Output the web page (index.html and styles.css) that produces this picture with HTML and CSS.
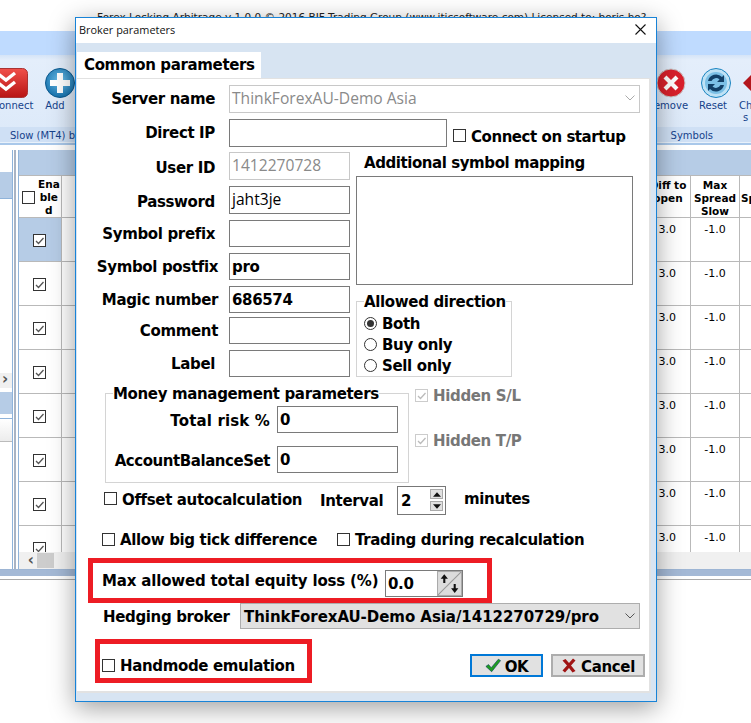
FILE: index.html
```html
<!DOCTYPE html>
<html lang="en">
<head>
<meta charset="utf-8">
<title>Broker parameters</title>
<link rel="stylesheet" href="styles.css">
</head>
<body>
<div class="app">
  <div class="app-title">Forex Locking Arbitrage v 1.0.0 © 2016 BJF Trading Group (www.iticsoftware.com) Licensed to: boris.ho?</div>
  <div class="app-caption"></div>
  <div class="ribbon">
    <div class="ribbon-main">
      <div class="ribbon-side">
        <div class="tool tool-connect">
          <svg class="icon icon-connect" viewBox="0 0 44 30"><defs><linearGradient id="gr" x1="0" y1="0" x2="0" y2="1"><stop offset="0" stop-color="#f0504a"/><stop offset="1" stop-color="#b81414"/></linearGradient></defs><rect x="0.5" y="0.5" width="43" height="29" rx="5" fill="url(#gr)" stroke="#a33"/><path d="M13 5l9 7 9-7M13 14l9 7 9-7" fill="none" stroke="#fff" stroke-width="3.4"/></svg>
          <span>onnect</span>
        </div>
        <div class="tool tool-add">
          <svg class="icon" viewBox="0 0 30 30"><defs><radialGradient id="gb" cx=".5" cy=".4" r=".6"><stop offset="0" stop-color="#6fc0ea"/><stop offset="1" stop-color="#1470ac"/></radialGradient></defs><circle cx="15" cy="15" r="14.5" fill="url(#gb)" stroke="#0e5a8e"/><path d="M12 5h6v7h7v6h-7v7h-6v-7H5v-6h7z" fill="#fff"/></svg>
          <span class="tool-text-add">Add</span>
        </div>
      </div>
      <div class="ribbon-side">
        <div class="tool tool-remove">
          <svg class="icon" viewBox="0 0 30 30"><circle cx="15" cy="15" r="14" fill="#d9202c" stroke="#c9c9c9"/><path d="M9 9l12 12M21 9L9 21" stroke="#fff" stroke-width="4.2"/></svg>
          <span>emove</span>
        </div>
        <div class="tool tool-reset">
          <svg class="icon" viewBox="0 0 30 30"><circle cx="15" cy="15" r="14.5" fill="#bfe2f5" stroke="#1a84c0"/><circle cx="15" cy="15" r="11" fill="#7cc0e6"/><path d="M7 13a8.300 8.300 0 0 1 14-4l2-2v7h-7l2.500-2.500a5 5 0 0 0-8 1.500zM23 17a8.300 8.300 0 0 1-14 4l-2 2v-7h7l-2.500 2.500a5 5 0 0 0 8-1.500z" fill="#123f66"/></svg>
          <span class="tool-text-reset">Reset</span>
        </div>
        <div class="tool tool-change">
          <svg class="icon icon-change" viewBox="0 0 16 24"><path d="M0 12L11 1v22z" fill="#b3161c"/></svg>
          <span>Ch<br>s</span>
        </div>
      </div>
    </div>
    <div class="ribbon-groups">
      <span class="group-left">Slow (MT4) b</span>
      <span class="group-right">Symbols</span>
    </div>
  </div>
  <div class="workspace">
    <aside class="side">
      <div class="side-top"></div>
      <div class="side-band"></div>
      <div class="side-list">
        <div class="side-scroll"><span>›</span></div>
      </div>
      <div class="side-band side-band-low"></div>
      <div class="side-list side-list-low">
        <div class="side-head"></div>
      </div>
    </aside>
    <div class="splitter"></div>
    <div class="grid-panel">
      <div class="grid-band"></div>
      <div class="grid">
        <div class="cell head head-check"><span class="cb"></span><span>Ena<br>ble<br>d</span></div>
        <div class="cell head"></div>
        <div class="cell head head-diff">Diff to<br>open</div>
        <div class="cell head">Max<br>Spread<br>Slow</div>
        <div class="cell head head-last">Sp</div>

        <div class="cell check selected"><span class="cb"><svg viewBox="0 0 11 11"><path d="M2 6l2.500 2.500L9.500 3" fill="none" stroke="#555" stroke-width="1.300"/></svg></span></div>
        <div class="cell"></div><div class="cell num-l">3.0</div><div class="cell num">-1.0</div><div class="cell"></div>

        <div class="cell check"><span class="cb"><svg viewBox="0 0 11 11"><path d="M2 6l2.500 2.500L9.500 3" fill="none" stroke="#555" stroke-width="1.300"/></svg></span></div>
        <div class="cell"></div><div class="cell num-l">3.0</div><div class="cell num">-1.0</div><div class="cell"></div>

        <div class="cell check"><span class="cb"><svg viewBox="0 0 11 11"><path d="M2 6l2.500 2.500L9.500 3" fill="none" stroke="#555" stroke-width="1.300"/></svg></span></div>
        <div class="cell"></div><div class="cell num-l">3.0</div><div class="cell num">-1.0</div><div class="cell"></div>

        <div class="cell check"><span class="cb"><svg viewBox="0 0 11 11"><path d="M2 6l2.500 2.500L9.500 3" fill="none" stroke="#555" stroke-width="1.300"/></svg></span></div>
        <div class="cell"></div><div class="cell num-l">3.0</div><div class="cell num">-1.0</div><div class="cell"></div>

        <div class="cell check"><span class="cb"><svg viewBox="0 0 11 11"><path d="M2 6l2.500 2.500L9.500 3" fill="none" stroke="#555" stroke-width="1.300"/></svg></span></div>
        <div class="cell"></div><div class="cell num-l">3.0</div><div class="cell num">-1.0</div><div class="cell"></div>

        <div class="cell check"><span class="cb"><svg viewBox="0 0 11 11"><path d="M2 6l2.500 2.500L9.500 3" fill="none" stroke="#555" stroke-width="1.300"/></svg></span></div>
        <div class="cell"></div><div class="cell num-l">3.0</div><div class="cell num">-1.0</div><div class="cell"></div>

        <div class="cell check"><span class="cb"><svg viewBox="0 0 11 11"><path d="M2 6l2.500 2.500L9.500 3" fill="none" stroke="#555" stroke-width="1.300"/></svg></span></div>
        <div class="cell"></div><div class="cell num-l">3.0</div><div class="cell num">-1.0</div><div class="cell"></div>

        <div class="cell check"><span class="cb"><svg viewBox="0 0 11 11"><path d="M2 6l2.500 2.500L9.500 3" fill="none" stroke="#555" stroke-width="1.300"/></svg></span></div>
        <div class="cell"></div><div class="cell num-l">3.0</div><div class="cell num">-1.0</div><div class="cell"></div>
      </div>
      <div class="hscroll"><span class="hscroll-arrow">‹</span><span class="hscroll-thumb"></span></div>
    </div>
  </div>
  <div class="app-foot"></div>
</div>

<section class="dialog">
  <header class="dialog-title">
    <span>Broker parameters</span>
    <svg class="close" viewBox="0 0 11 11"><path d="M.5.5l10 10M10.500.5l-10 10" stroke="#111" stroke-width="1.100"/></svg>
  </header>
  <div class="tabs"><div class="tab">Common parameters</div></div>
  <div class="panel">
    <div class="row row-server">
      <div class="label label-main">Server name</div>
      <div class="field field-light field-server">ThinkForexAU-Demo Asia<svg class="chev" viewBox="0 0 10 6"><path d="M.5.5L5 5 9.500.5" fill="none" stroke="#aaa"/></svg></div>
    </div>
    <div class="row row-direct">
      <div class="label label-main">Direct IP</div>
      <div class="field field-direct"></div>
      <span class="cb cb-connect"></span>
      <span class="label label-connect">Connect on startup</span>
    </div>

    <div class="mid">
      <div class="fields">
        <div class="label label-low">User ID</div><div class="field field-light">1412270728</div>
        <div class="label label-low">Password</div><div class="field field-thin">jaht3je</div>
        <div class="label">Symbol prefix</div><div class="field"></div>
        <div class="label label-out">Symbol postfix</div><div class="field">pro</div>
        <div class="label label-out">Magic number</div><div class="field">686574</div>
        <div class="label label-out">Comment</div><div class="field"></div>
        <div class="label">Label</div><div class="field"></div>
      </div>
      <div class="mid-right">
        <div class="label mapping-title">Additional symbol mapping</div>
        <div class="mapping"></div>
        <fieldset class="box direction">
          <legend>Allowed direction</legend>
          <div class="radio-row"><span class="radio radio-on"></span><span>Both</span></div>
          <div class="radio-row"><span class="radio"></span><span>Buy only</span></div>
          <div class="radio-row"><span class="radio"></span><span>Sell only</span></div>
        </fieldset>
      </div>
    </div>

    <div class="money-row">
      <fieldset class="box money">
        <legend>Money management parameters</legend>
        <div class="money-line">
          <div class="label money-label money-label-wide">Total risk %</div><div class="field">0</div>
        </div>
        <div class="money-line money-line-low">
          <div class="label money-label money-label-tight">AccountBalanceSet</div><div class="field">0</div>
        </div>
      </fieldset>
      <div class="hidden-opts">
        <div class="opt opt-off"><span class="cb cb-off"><svg viewBox="0 0 11 11"><path d="M2 6l2.500 2.500L9.500 3" fill="none" stroke="#bbb" stroke-width="1.300"/></svg></span><span>Hidden S/L</span></div>
        <div class="opt opt-off"><span class="cb cb-off"><svg viewBox="0 0 11 11"><path d="M2 6l2.500 2.500L9.500 3" fill="none" stroke="#bbb" stroke-width="1.300"/></svg></span><span>Hidden T/P</span></div>
      </div>
    </div>

    <div class="row row-offset">
      <div class="opt opt-offset"><span class="cb"></span><span>Offset autocalculation</span></div>
      <div class="label interval-label">Interval</div>
      <div class="field spin">2
        <div class="spin-btns">
          <span class="spin-btn"><svg viewBox="0 0 9 5"><path d="M4.500 0L9 5H0z" fill="#111"/></svg></span>
          <span class="spin-btn"><svg viewBox="0 0 9 5"><path d="M4.500 5L9 0H0z" fill="#111"/></svg></span>
        </div>
      </div>
      <div class="label minutes-label">minutes</div>
    </div>

    <div class="row row-allow">
      <div class="opt opt-allow"><span class="cb"></span><span>Allow big tick difference</span></div>
      <div class="opt"><span class="cb"></span><span>Trading during recalculation</span></div>
    </div>

    <div class="mark mark-equity">
      <div class="label equity-label">Max allowed total equity loss (%)</div>
      <div class="field equity-field">0.0
        <svg class="equity-btn" viewBox="0 0 24 24"><rect x=".5" y=".5" width="23" height="23" fill="#dcdcdc" stroke="#aaa"/><path d="M1 23L23 1" stroke="#999"/><path d="M7 3l3.500 4.500H8v4H6v-4H3.500zM17 21l3.500-4.500H18v-4h-2v4h-2.500z" fill="#111"/></svg>
      </div>
    </div>

    <div class="row row-hedge">
      <div class="label hedge-label">Hedging broker</div>
      <div class="field hedge-select"><span>ThinkForexAU-Demo Asia/1412270729/pro</span><svg class="chev" viewBox="0 0 10 6"><path d="M.5.5L5 5 9.500.5" fill="none" stroke="#555"/></svg></div>
    </div>

    <div class="row row-bottom">
      <div class="mark mark-hand">
        <div class="opt"><span class="cb"></span><span>Handmode emulation</span></div>
      </div>
      <div class="btn btn-ok"><svg class="btn-icon" viewBox="0 0 18 16"><path d="M1 9l3-2 3 3.500L15 1l2.500 1.500L7.500 15z" fill="#1f9e1f" stroke="#0b3f5e" stroke-width=".7"/></svg><span>OK</span></div>
      <div class="btn btn-cancel"><svg class="btn-icon" viewBox="0 0 15 15"><path d="M1 2.500L4 1l3.500 4L11.500.5 14 2.500 9.500 7.500 14 13l-3 1.500L7.500 10l-4 4.500L1 12.500 5.500 7.500z" fill="#a01414"/></svg><span>Cancel</span></div>
    </div>
  </div>
</section>
</body>
</html>
```

FILE: styles.css
```css
* { box-sizing: border-box; }
html, body { margin: 0; padding: 0; }
body {
  width: 751px;
  height: 723px;
  overflow: hidden;
  position: relative;
  background: #fff;
  font-family: "DejaVu Sans", sans-serif;
  color: #000;
}

/* background application */
.app { width: 751px; height: 723px; display: flex; flex-direction: column; }
.app-title {
  height: 31px;
  padding: 10px 0 0 97px;
  font-size: 10.5px;
  line-height: 14px;
  white-space: nowrap;
  color: #222;
  overflow: hidden;
}
.app-caption { height: 24px; background: #bfdbff; }
.ribbon {
  height: 90px;
  background: linear-gradient(#d5e4f7 0, #e4eefb 5px, #dce9f9 100%);
  border-bottom: 2px solid #a9c8ea;
  display: flex;
  flex-direction: column;
  color: #15428b;
  font-size: 10px;
}
.ribbon-main { height: 72px; display: flex; justify-content: space-between; padding-top: 13px; }
.ribbon-side { display: flex; }
.tool { display: flex; flex-direction: column; align-items: center; line-height: 12px; text-align: center; }
.icon { width: 30px; height: 30px; margin-bottom: 2px; display: block; }
.icon-connect { width: 44px; margin-left: -16px; }
.tool-connect { width: 28px; align-items: flex-start; margin-left: 0; }
.tool-connect span { margin-left: -1px; }
.tool-add { width: 30px; margin-left: 17px; }
.tool-text-add { margin-right: 10px; }
.tool-remove { width: 30px; }
.tool-reset { width: 30px; margin-left: 15px; }
.tool-text-reset { margin-right: 6px; }
.tool-change { width: 12px; margin-left: 8px; align-items: flex-start; }
.icon-change { width: 16px; height: 24px; margin: 3px 0 5px 4px; }
.tool-change span { margin-left: 0; }
.ribbon-groups {
  height: 16px;
  background: #cfe0f5;
  border-bottom: 1px solid #e8f1fb;
  position: relative;
  display: flex;
  justify-content: space-between;
  line-height: 17px;
}
.group-left { padding-left: 10px; white-space: nowrap; }
.group-right { padding-right: 38px; }

.workspace {
  height: 425px;
  padding-top: 5px;
  display: flex;
  border-bottom: 1px solid #9db5d4;
  background: #fff;
}
.side { width: 13px; display: flex; flex-direction: column; border-right: 1px solid #8fb3da; }
.side-top { height: 22px; background: #fff; }
.side-band { height: 26px; background: #b6cce6; }
.side-band-low { height: 22px; }
.side-list { height: 194px; background: #fff; display: flex; flex-direction: column; justify-content: flex-end; border-top: 1px solid #8fb3da; }
.side-scroll { height: 15px; background: #f0f0f0; font-size: 15px; line-height: 13px; color: #555; font-weight: 700; padding-left: 2px; margin-bottom: 4px; }
.side-list-low { flex: 1; height: auto; justify-content: flex-start; margin-top: 4px; }
.side-head { height: 23px; background: linear-gradient(#fff, #ececec); border-bottom: 1px solid #bbb; }
.splitter { width: 5px; background: linear-gradient(90deg, #fff 0, #fff 1px, #a9b4c4 1px, #a9b4c4 3px, #fff 3px); }
.grid-panel { flex: 1; min-width: 0; display: flex; flex-direction: column; border-left: 1px solid #8fb3da; }
.grid-band { height: 25px; background: #b6cce6; flex: none; }
.grid {
  flex: 1;
  min-height: 0;
  overflow: hidden;
  display: grid;
  grid-template-columns: 43px 584px 45px 49px 12px;
  grid-auto-rows: 44px;
  grid-template-rows: 43px;
  font-size: 10px;
  line-height: 13px;
}
.cell { border-right: 1px solid #b9b9b9; border-bottom: 1px solid #b9b9b9; }
.head { font-weight: 700; text-align: center; font-size: 10.5px; padding-top: 3px; border-top: 1px solid #b9b9b9; }
.head-check { display: flex; align-items: center; gap: 3px; padding: 1px 0 0 3px; }
.head-check .cb { flex: none; }
.head-diff { padding: 3px 0 0 0; white-space: nowrap; }
.head-last { padding-top: 16px; text-align: left; padding-left: 1px; border-right: 0; }
.check { display: flex; justify-content: center; padding-top: 16px; padding-right: 2px; }
.selected { background: #b6cce6; }
.num { text-align: center; padding-top: 5px; font-size: 11px; }
.num-l { text-align: right; padding: 5px 14px 0 0; font-size: 11px; }
.hscroll { height: 17px; background: #f0f0f0; flex: none; display: flex; align-items: center; position: relative; }
.hscroll-arrow { width: 18px; text-align: right; font-size: 15px; line-height: 15px; font-weight: 700; color: #555; padding-right: 3px; }
.hscroll-thumb { width: 17px; height: 15px; background: #cdcdcd; }
.app-foot { height: 10px; background: linear-gradient(#a4b9d6 0, #a4b9d6 6px, #fff 6px, #fff 9px, #aaa 9px); flex: none; }

/* dialog window */
.dialog {
  position: absolute;
  left: 75px;
  top: 17px;
  width: 582px;
  height: 685px;
  background: #d7e4f2;
  border: 1px solid #1883d7;
  box-shadow: 0 6px 24px rgba(0, 0, 0, .38);
  display: flex;
  flex-direction: column;
}
.dialog-title {
  height: 25px;
  flex: none;
  background: #fff;
  display: flex;
  align-items: center;
  justify-content: space-between;
  padding: 0 10px 2px 3px;
  font-family: "Open Sans", sans-serif;
  font-size: 10.9px;
  color: #111;
}
.close { width: 11px; height: 11px; }
.tabs { height: 35px; flex: none; padding: 9px 0 0 1px; }
.tab {
  width: 184px;
  height: 26px;
  background: #fff;
  font-weight: 700;
  font-size: 15px;
  letter-spacing: -.35px;
  line-height: 26px;
  padding-left: 7px;
  white-space: nowrap;
}
.panel {
  margin: 0 5px 0 1px;
  height: 615px;
  flex: none;
  background: #fff;
  border-top: 1px solid #e2e2e2;
  border-right: 2px solid #e2e2e2;
  border-bottom: 2px solid #e2e2e2;
  padding-top: 6px;
  font-size: 15px;
  letter-spacing: -.35px;
  font-weight: 700;
}

.label { white-space: nowrap; text-align: right; font-weight: 700; font-size: 15px; letter-spacing: -.35px; }
.row { display: flex; align-items: center; }
.label-main { width: 138px; margin-right: 14px; }
.label-connect { margin-top: 7px; letter-spacing: -.45px; }

.field {
  height: 27px;
  border: 1px solid #7a7a7a;
  background: #fff;
  font-size: 15px;
  letter-spacing: -.35px;
  font-weight: 700;
  line-height: 27px;
  padding-left: 2px;
  white-space: nowrap;
  overflow: hidden;
}
.field-light {
  border-color: #c8c8c8;
  color: #8a8a8a;
  font-family: "Open Sans", sans-serif;
  font-weight: 400;
  font-size: 15.6px;
  letter-spacing: 0;
  line-height: 25px;
}
.field-thin { font-family: "Open Sans", sans-serif; font-weight: 400; font-size: 15.6px; letter-spacing: 0; line-height: 25px; }
.row-server { height: 28px; margin-bottom: 6px; }
.row-server .field { height: 28px; margin-top: 0; }
.field-server { width: 411px; display: flex; justify-content: space-between; align-items: center; padding: 0 4px 2px 2px; }
.chev { width: 10px; height: 6px; flex: none; }
.row-direct { height: 28px; margin-bottom: 5px; }
.field-direct { width: 218px; height: 28px; }
.cb {
  width: 13px;
  height: 13px;
  border: 1px solid #333;
  background: #fff;
  display: inline-block;
  flex: none;
}
.cb svg { display: block; width: 11px; height: 11px; }
.cb-connect { margin: 5px 5px 0 6px; }

.mid { display: flex; height: 225px; }
.fields {
  display: grid;
  width: 273px;
  grid-template-columns: 138px 121px;
  column-gap: 14px;
  grid-template-rows: 34px 34px 33px 33px 31px 33px 27px;
}
.fields .label { line-height: 28px; }
.fields .label-low { line-height: 32px; }
.fields .label-out { margin-right: -3px; }
.fields .field:nth-child(2), .fields .field:nth-child(4) { height: 28px; }
.mid-right { margin-left: 6px; display: flex; flex-direction: column; }
.mapping-title { height: 25px; line-height: 23px; text-align: left; padding-left: 8px; letter-spacing: -.43px; }
.mapping { width: 277px; height: 109px; border: 1px solid #7a7a7a; flex: none; }

.box { border: 1px solid #d4d4d4; margin: 0; padding: 0; background: #fff; min-width: 0; }
.box legend { padding: 2px 0 0; margin-left: 7px; font-weight: 700; font-size: 15px; letter-spacing: -.35px; line-height: 18px; white-space: nowrap; }
.direction { width: 156px; height: 86px; margin-top: 6px; padding: 2px 0 0 7px; }
.direction legend { margin-left: 0; }
.radio-row { height: 21px; display: flex; align-items: center; gap: 5px; white-space: nowrap; }
.radio { width: 13px; height: 13px; border: 1px solid #333; border-radius: 50%; flex: none; display: flex; align-items: center; justify-content: center; }
.radio-on::after { content: ""; width: 7px; height: 7px; border-radius: 50%; background: #333; }

.money-row { display: flex; margin-top: 6px; padding-left: 28px; height: 100px; }
.money { width: 304px; height: 100px; padding: 3px 0 0 0; }
.money-line { display: flex; align-items: center; height: 27px; }
.money-line-low { margin-top: 13px; }
.money-label { width: 164px; margin: 2px 7px 0 0; }
.money-label-wide { letter-spacing: .15px; }
.money-label-tight { letter-spacing: -.45px; }
.money-line .field { width: 121px; }
.hidden-opts { margin-left: 6px; padding-top: 2px; display: flex; flex-direction: column; gap: 25px; }
.opt { display: flex; align-items: center; height: 20px; gap: 5px; white-space: nowrap; font-size: 15px; letter-spacing: -.35px; font-weight: 700; }
.opt > span:last-child { padding-top: 2px; }
.opt-off { color: #777; }
.cb-off { border-color: #ccc; }

.row-offset { height: 29px; margin-top: 3px; padding-left: 27px; }
.opt-offset { width: 216px; margin-top: -4px; }
.interval-label { width: 65px; text-align: left; }
.spin { width: 49px; height: 29px; margin-left: 12px; display: flex; justify-content: space-between; line-height: 29px; padding-left: 3px; border-color: #777; }
.spin-btns { display: flex; flex-direction: column; gap: 2px; padding: 2px 2px 0 0; }
.spin-btn { width: 13px; height: 10px; background: #e1e1e1; border: 1px solid #aaa; display: flex; align-items: center; justify-content: center; }
.spin-btn svg { width: 8px; height: 5px; }
.minutes-label { margin: -4px 0 0 18px; }

.row-allow { height: 20px; margin-top: 14px; padding-left: 25px; }
.opt-allow { width: 235px; }

.mark { border: 5px solid #ed1c24; background: #fff; }
.mark-equity {
  margin: 9px 0 0 11px;
  width: 404px;
  height: 45px;
  display: flex;
  align-items: center;
  padding-left: 9px;
}
.equity-label { width: 283px; text-align: left; letter-spacing: -.17px; }
.equity-field { width: 78px; height: 27px; margin-top: 6px; position: relative; padding-left: 2px; }
.equity-btn { position: absolute; right: 0; top: 0; width: 25px; height: 25px; }
.row-hedge { height: 26px; }
.hedge-label { width: 137px; margin: 2px 0 0 26px; text-align: left; }
.hedge-select { width: 400px; height: 26px; background: #e1e1e1; border-color: #adadad; display: flex; justify-content: space-between; align-items: center; padding: 0 4px 0 3px; letter-spacing: -.05px; }
.hedge-select span { padding-top: 2px; }
.row-bottom { height: 44px; margin-top: 10px; align-items: flex-start; }
.mark-hand { width: 217px; height: 44px; margin-left: 18px; padding: 11px 0 0 2px; }
.btn {
  height: 23px;
  margin-top: 15px;
  background: #e1e1e1;
  border: 2px solid #adadad;
  display: flex;
  align-items: center;
  justify-content: center;
  gap: 4px;
  font-size: 15px;
  letter-spacing: -.35px;
  font-weight: 700;
}
.btn span { padding-top: 2px; }
.btn-ok { width: 73px; margin-left: 158px; border-color: #0078d7; }
.btn-cancel { width: 94px; margin-left: 8px; }
.btn-icon { width: 16px; height: 15px; flex: none; }
```
